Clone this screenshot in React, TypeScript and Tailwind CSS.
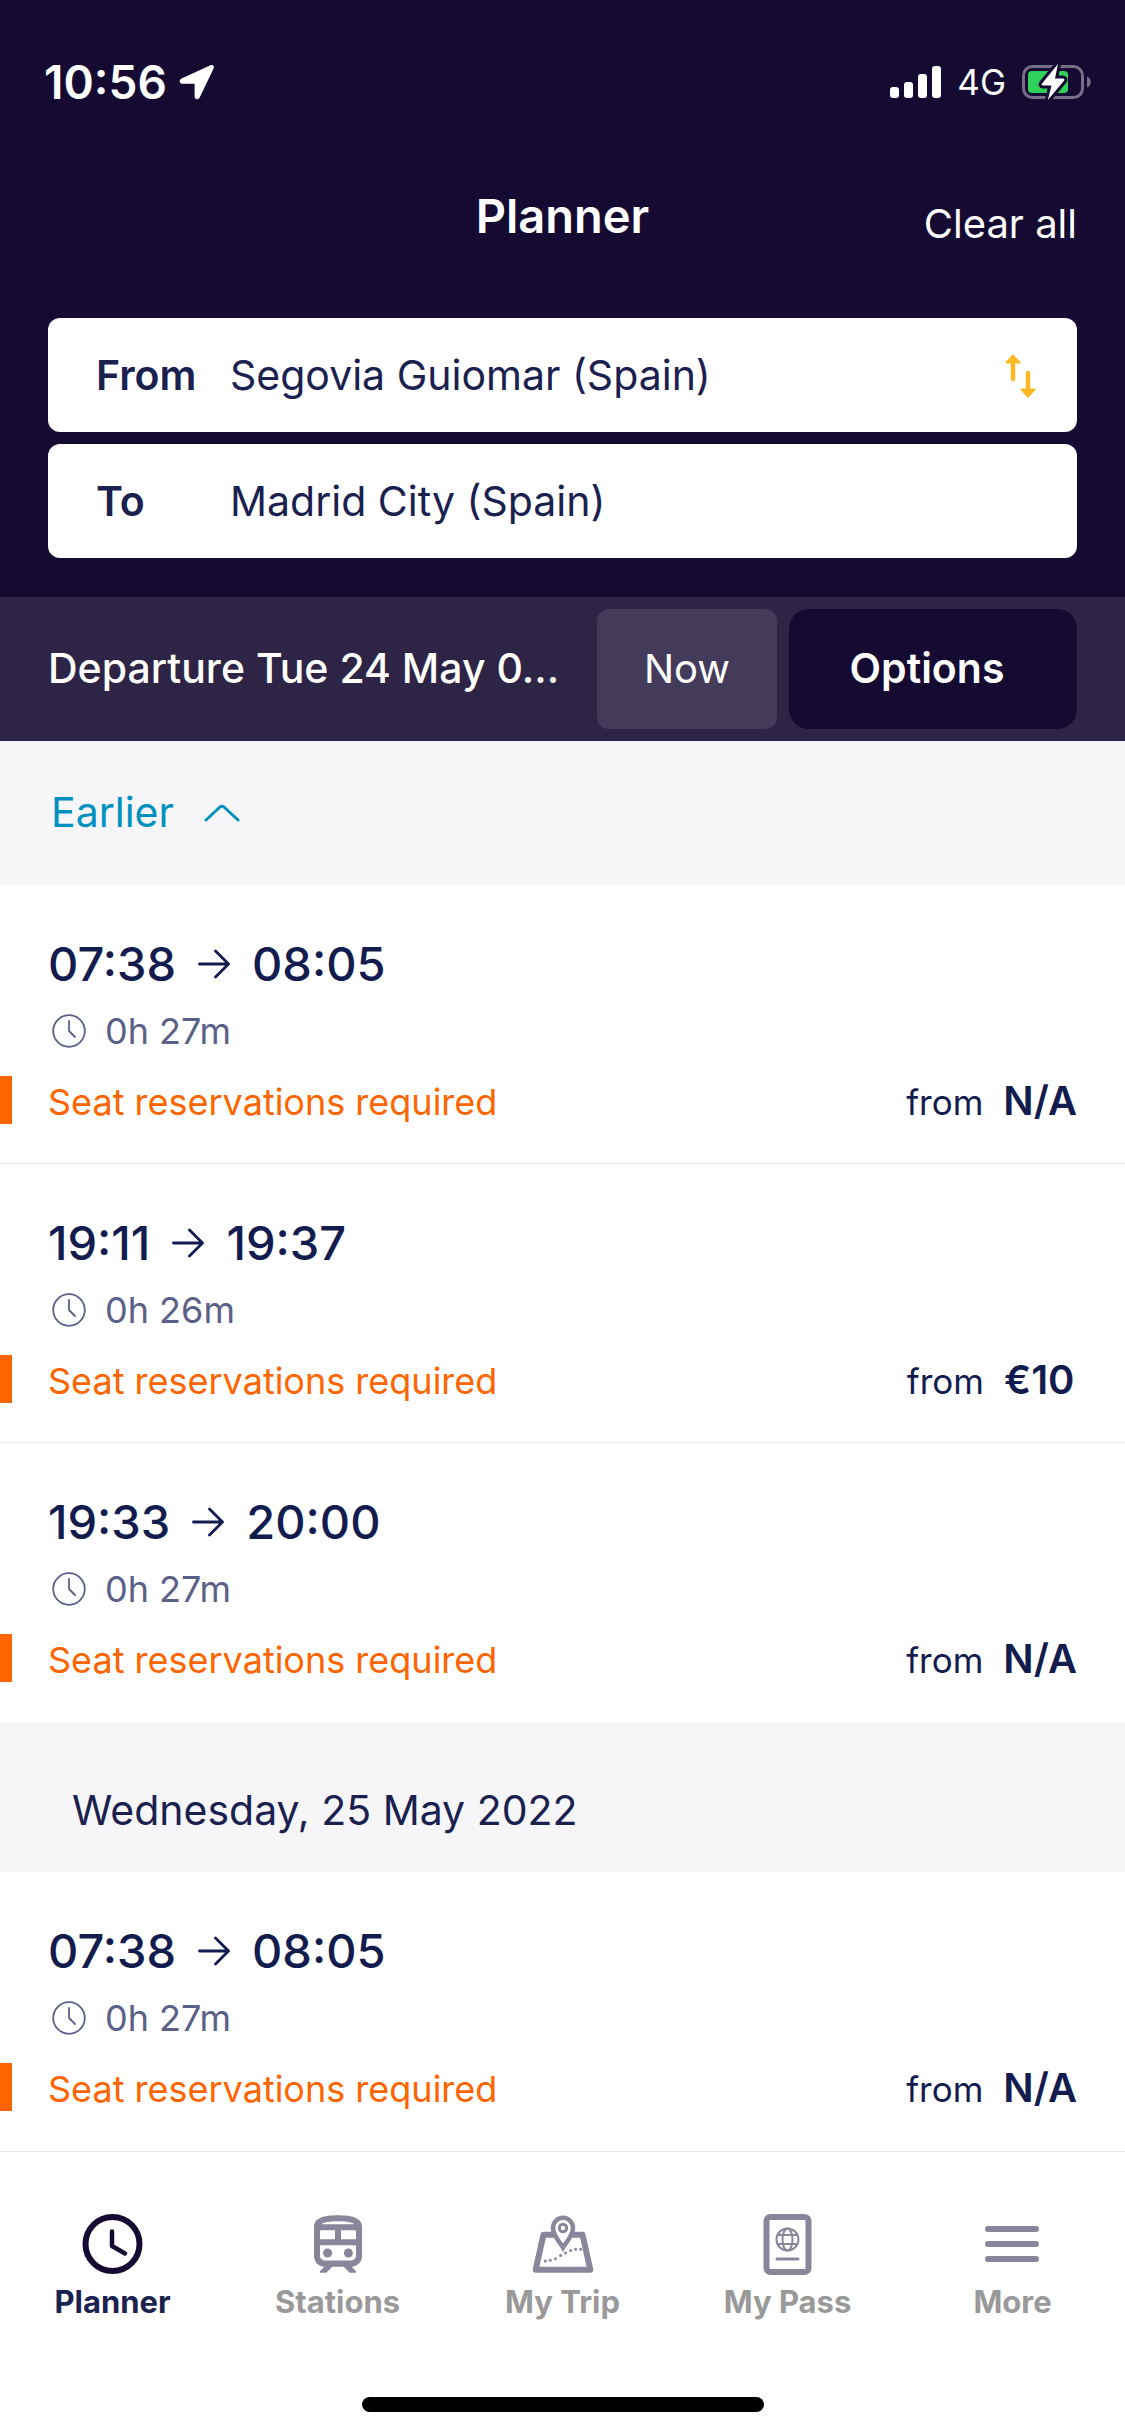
import React, { useState } from 'react';

type Trip = {
  id: number;
  departure: string;
  arrival: string;
  duration: string;
  price: string;
};

const todayTrips: Trip[] = [
  { id: 1, departure: '07:38', arrival: '08:05', duration: '0h 27m', price: 'N/A' },
  { id: 2, departure: '19:11', arrival: '19:37', duration: '0h 26m', price: '€10' },
  { id: 3, departure: '19:33', arrival: '20:00', duration: '0h 27m', price: 'N/A' },
];

const tomorrowTrips: Trip[] = [
  { id: 4, departure: '07:38', arrival: '08:05', duration: '0h 27m', price: 'N/A' },
];

const StatusBar = () => (
  <div className="flex h-[164px] items-center justify-between pl-11 pr-[34px] text-white">
    <div className="flex items-center gap-3">
      <span className="text-[46px] font-semibold leading-[60px]">10:56</span>
      <svg className="h-9 w-9" viewBox="0 0 36 36" fill="currentColor">
        <path d="M31.5 1.2 2.6 14.6C-.4 16 .2 19.8 3.4 19.8h12.2v12.4c0 3.4 3.9 4 5.2 1L34.6 4.400c1-2.300-.8-4.200-3.100-3.200Z" />
      </svg>
    </div>
    <div className="flex items-center gap-4">
      <svg className="h-8 w-[51px]" viewBox="0 0 51 32" fill="currentColor">
        <rect x="0" y="21" width="9" height="11" rx="3" />
        <rect x="14" y="16" width="9" height="16" rx="3" />
        <rect x="28" y="8" width="9" height="24" rx="3" />
        <rect x="42" y="0" width="9" height="32" rx="3" />
      </svg>
      <span className="text-[35px] leading-[60px]">4G</span>
      <svg className="h-9 w-[69px]" viewBox="0 0 69 36">
        <rect x="1.500" y="2.500" width="59" height="31" rx="9" fill="none" stroke="#766e86" strokeWidth="3" />
        <path d="M65 12.500c5 1.500 5 9.500 0 11Z" fill="#766e86" />
        <rect x="6" y="7" width="40" height="22" rx="4" fill="#30d158" />
        <path
          d="M36 0 20 19.500c-.8 1-.3 2 1 2h8.500L25.800 36 42 16.800c.8-1 .3-2.200-1-2.200h-8Z"
          fill="#fff"
          stroke="#150a32"
          strokeWidth="6"
          strokeLinejoin="round"
          paintOrder="stroke"
        />
      </svg>
    </div>
  </div>
);

const SwapIcon = () => (
  <svg className="h-11 w-8" viewBox="0 0 32 44" fill="#fdb924" stroke="#fdb924" strokeLinecap="round" strokeLinejoin="round">
    <path d="M8 5v20M23 19v20" strokeWidth="4.500" />
    <path d="m8 1.500 6.500 7h-13ZM23 42.500l6.500-7h-13Z" strokeWidth="2" />
  </svg>
);

const ArrowIcon = () => (
  <svg className="h-8 w-8" viewBox="0 0 32 32" fill="none" stroke="currentColor" strokeWidth="2.800" strokeLinecap="round" strokeLinejoin="round">
    <path d="M1.500 16h29M17.500 3l13 13-13 13" />
  </svg>
);

const DurationIcon = () => (
  <svg className="h-9 w-9" viewBox="0 0 36 36" fill="none" stroke="currentColor" strokeWidth="1.800" strokeLinecap="round" strokeLinejoin="round">
    <circle cx="18" cy="18" r="15.800" />
    <path d="M18 8v10l6 6" />
  </svg>
);

const ClockIcon = () => (
  <svg className="size-[72px]" viewBox="0 0 72 72" fill="none" stroke="#150a32" strokeLinecap="round" strokeLinejoin="round">
    <circle cx="35.500" cy="36" r="27" strokeWidth="6" />
    <path d="M35 23.500V38l13 7.500" strokeWidth="4.500" />
  </svg>
);

const TrainIcon = () => (
  <svg className="size-[72px]" viewBox="0 0 72 72" fill="#8b859b">
    <path
      fillRule="evenodd"
      d="M36 7.300c-14 0-24 2.700-24 11.500v29.500c0 5.800 4.700 10.400 10.400 10.400L18 63v1.700h6.300l6-6h11.400l6 6H54V63l-4.400-4.300C55.300 58.700 60 54 60 48.300V18.800C60 10 50 7.300 36 7.300Zm0 6c8.500 0 14.500 1 16.500 3h-33c2-2 8-3 16.500-3ZM18 22.300h15v9H18Zm21 0h15v9H39ZM18 37.300h36v10.500c0 2.500-2 4.700-4.700 4.700H22.700c-2.700 0-4.700-2.200-4.700-4.700Z"
    />
    <circle cx="25.600" cy="45" r="4.500" />
    <circle cx="46.400" cy="45" r="4.500" />
  </svg>
);

const routeDots = [
  [18.3, 53],
  [23.3, 52.3],
  [28.5, 50.8],
  [33.6, 47.6],
  [38.6, 45],
  [43.6, 42.6],
  [48.6, 41.2],
  [53.6, 41.2],
];

const TripIcon = () => (
  <svg className="size-[72px]" viewBox="0 0 72 72" fill="none" stroke="#8b859b">
    <path d="M16.500 26.700h39l7.800 35H8.700Z" strokeWidth="6" strokeLinejoin="round" />
    <path d="M36 39.500c-2-3.600-10-11.800-10-19.500a10 10.300 0 0 1 20 0c0 7.700-8 15.900-10 19.500Z" fill="#fff" strokeWidth="4.500" />
    <circle cx="36" cy="20" r="3.700" strokeWidth="3" />
    {routeDots.map(([x, y]) => (
      <circle key={x} cx={x} cy={y} r="1.500" fill="#8b859b" stroke="none" />
    ))}
  </svg>
);

const PassIcon = () => (
  <svg className="size-[72px]" viewBox="0 0 72 72" fill="none" stroke="#8b859b">
    <rect x="14.500" y="9" width="42" height="55" rx="4" strokeWidth="6" />
    <g strokeWidth="2">
      <circle cx="35.500" cy="31.500" r="11" />
      <ellipse cx="35.500" cy="31.500" rx="5" ry="11" />
      <path d="M25.500 27h20M25.500 36h20" />
    </g>
    <path d="M25 51h21" strokeWidth="3" strokeLinecap="round" />
  </svg>
);

const MoreIcon = () => (
  <svg className="size-[72px]" viewBox="0 0 72 72" fill="none" stroke="#8b859b" strokeWidth="6" strokeLinecap="round">
    <path d="M11 21h48M11 36h48M11 51h48" />
  </svg>
);

const tabs = [
  { label: 'Planner', Icon: ClockIcon },
  { label: 'Stations', Icon: TrainIcon },
  { label: 'My Trip', Icon: TripIcon },
  { label: 'My Pass', Icon: PassIcon },
  { label: 'More', Icon: MoreIcon },
];

const TripRow = ({ trip }: { trip: Trip }) => (
  <li className="border-b border-[#e8e8ee] pb-[38px] pt-12 last:border-transparent">
    <div className="flex h-[62px] items-center gap-[22px] pl-12 text-[47px] font-medium leading-[62px] text-[#131c4e]">
      <span>{trip.departure}</span>
      <ArrowIcon />
      <span>{trip.arrival}</span>
    </div>
    <div className="mt-3 flex h-12 items-center gap-[18px] pl-[51px] text-[36px] leading-[48px] text-[#5b6088]">
      <DurationIcon />
      <span>{trip.duration}</span>
    </div>
    <div className="mb-px mt-[21px] flex h-12 items-baseline justify-between border-l-[12px] border-[#fd6500] pl-9 pr-12 leading-[50px]">
      <span className="text-[36px] text-[#fd6500]">Seat reservations required</span>
      <span className="flex items-baseline gap-5 text-[#131c4e]">
        <span className="text-[35px]">from</span>
        <span className="min-w-[73px] text-[40px] font-semibold">{trip.price}</span>
      </span>
    </div>
  </li>
);

export default function App() {
  const [from, setFrom] = useState('Segovia Guiomar (Spain)');
  const [to, setTo] = useState('Madrid City (Spain)');
  const [activeTab, setActiveTab] = useState('Planner');

  const swap = () => {
    setFrom(to);
    setTo(from);
  };

  const clearAll = () => {
    setFrom('');
    setTo('');
  };

  return (
    <div className="flex min-h-screen w-full flex-col bg-white font-['Inter',sans-serif] text-[#1a214f]">
      <header className="bg-[#150a32] pb-[39px]">
        <StatusBar />
        <div className="grid h-[154px] grid-cols-3 items-start px-12 pt-[22px] text-white">
          <h1 className="col-start-2 text-center text-[47px] font-semibold leading-[60px]">Planner</h1>
          <button onClick={clearAll} className="mt-2 justify-self-end text-[40px] leading-[60px]">
            Clear all
          </button>
        </div>
        <div className="flex flex-col gap-3 px-12">
          <div className="flex h-[114px] items-center rounded-xl bg-white pl-12 pr-10 pt-px text-[41px]">
            <label htmlFor="from" className="w-[134px] shrink-0 font-semibold">From</label>
            <input
              id="from"
              value={from}
              onChange={(e) => setFrom(e.target.value)}
              className="min-w-0 flex-1 bg-transparent outline-none" />
            <button onClick={swap} aria-label="Swap stations">
              <SwapIcon />
            </button>
          </div>
          <div className="flex h-[114px] items-center rounded-xl bg-white pl-12 pr-10 pt-px text-[41px]">
            <label htmlFor="to" className="w-[134px] shrink-0 font-semibold">To</label>
            <input
              id="to"
              value={to}
              onChange={(e) => setTo(e.target.value)}
              className="min-w-0 flex-1 bg-transparent outline-none" />
          </div>
        </div>
      </header>

      <div className="flex h-36 items-center gap-3 bg-[#2e2446] px-12 text-[41px] text-white">
        <button className="min-w-0 flex-1 whitespace-nowrap text-left font-medium">Departure Tue 24 May 0...</button>
        <button className="h-[120px] w-[180px] rounded-xl bg-[#443b5b] text-[40px]">Now</button>
        <button className="h-[120px] w-[288px] rounded-[20px] bg-[#150a32] pr-3 font-semibold">Options</button>
      </div>

      <main className="flex-1">
        <div className="flex h-36 items-center bg-[#f6f6f9] pl-[51px]">
          <button className="flex items-center gap-[30px] text-[41px] text-[#0091c0]">
            Earlier
            <svg className="h-[18px] w-9" viewBox="0 0 36 18" fill="none" stroke="currentColor" strokeWidth="3" strokeLinecap="round" strokeLinejoin="round">
              <path d="M2 16 16 3q2-1.500 4 0l14 13" />
            </svg>
          </button>
        </div>
        <ul>
          {todayTrips.map((trip) => (
            <TripRow key={trip.id} trip={trip} />
          ))}
        </ul>
        <h2 className="flex h-[150px] items-center bg-[#f6f6f9] pl-[72px] pt-7 text-[41px]">Wednesday, 25 May 2022</h2>
        <ul className="border-b border-[#e8e8ee]">
          {tomorrowTrips.map((trip) => (
            <TripRow key={trip.id} trip={trip} />
          ))}
        </ul>
      </main>

      <nav className="pt-14">
        <div className="grid grid-cols-5">
          {tabs.map(({ label, Icon }) => (
            <button key={label} onClick={() => setActiveTab(label)} className="flex flex-col items-center">
              <Icon />
              <span
                className={`text-[31px] font-bold leading-[44px] ${
                activeTab === label ? 'text-[#1a2350]' : 'text-[#999999]'}`
                }>
                {label}
              </span>
            </button>
          ))}
        </div>
        <div className="mx-auto mb-6 mt-[73px] h-[15px] w-[402px] rounded-full bg-black"></div>
      </nav>
    </div>);

}
